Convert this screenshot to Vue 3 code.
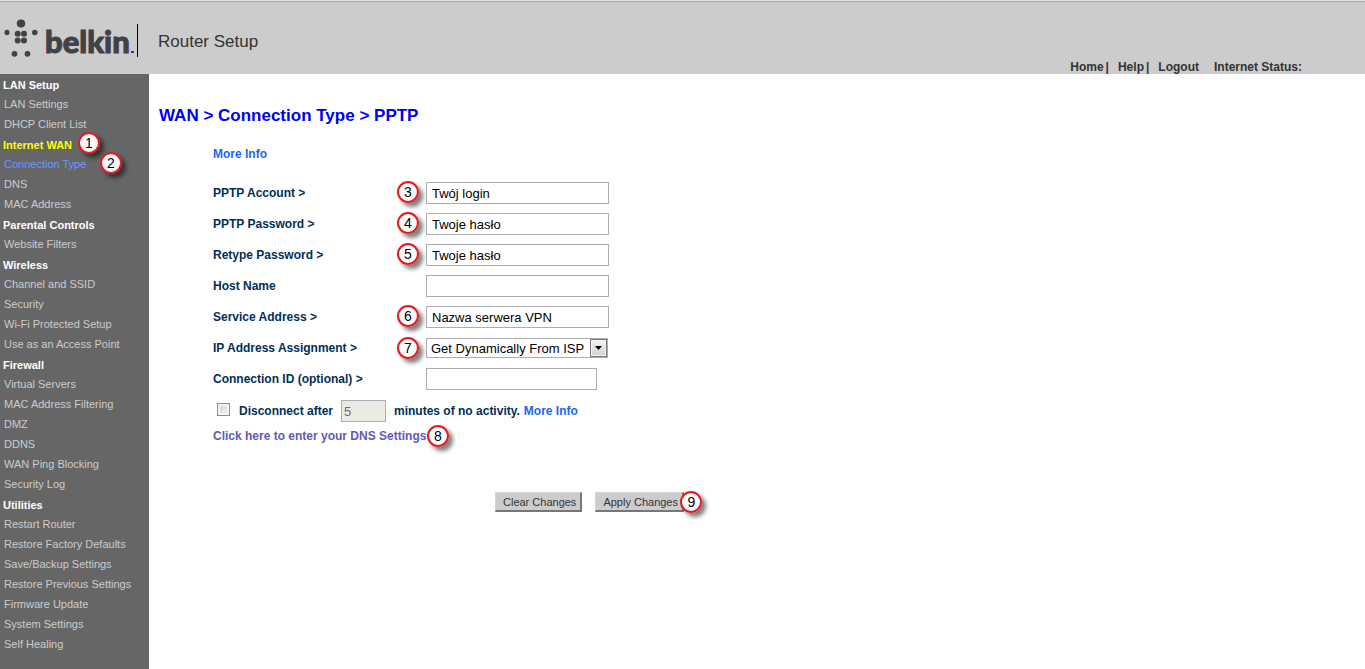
<script setup>
import { ref } from 'vue'

const menu = [
  { title: 'LAN Setup', items: ['LAN Settings', 'DHCP Client List'] },
  { title: 'Internet WAN', active: true, badge: 1, items: ['Connection Type', 'DNS', 'MAC Address'] },
  { title: 'Parental Controls', items: ['Website Filters'] },
  { title: 'Wireless', items: ['Channel and SSID', 'Security', 'Wi-Fi Protected Setup', 'Use as an Access Point'] },
  { title: 'Firewall', items: ['Virtual Servers', 'MAC Address Filtering', 'DMZ', 'DDNS', 'WAN Ping Blocking', 'Security Log'] },
  {
    title: 'Utilities',
    items: [
      'Restart Router', 'Restore Factory Defaults', 'Save/Backup Settings', 'Restore Previous Settings',
      'Firmware Update', 'System Settings', 'Self Healing'
    ]
  }
]
const current = 'Connection Type'

const fields = ref([
  { id: 'account', label: 'PPTP Account >', value: 'Twój login', badge: 3 },
  { id: 'password', label: 'PPTP Password >', value: 'Twoje hasło', badge: 4 },
  { id: 'retype', label: 'Retype Password >', value: 'Twoje hasło', badge: 5 },
  { id: 'host', label: 'Host Name', value: '' },
  { id: 'service', label: 'Service Address >', value: 'Nazwa serwera VPN', badge: 6 }
])
const connectionId = ref('')
const idle = ref('5')
const autoDisconnect = ref(false)
</script>

<template>
  <div class="page">
    <header class="header">
      <div class="brand">
        <svg class="mark" viewBox="0 0 34 40" aria-hidden="true">
          <ellipse cx="17" cy="5.5" rx="4.2" ry="4" />
          <ellipse cx="3" cy="14.5" rx="2.5" ry="2.8" />
          <ellipse cx="30.8" cy="14.5" rx="2.8" ry="2.8" />
          <circle cx="13.7" cy="15.8" r="3" />
          <circle cx="20" cy="15.8" r="3" />
          <circle cx="13.7" cy="22.4" r="3" />
          <circle cx="20" cy="22.4" r="3" />
          <circle cx="10.5" cy="35.8" r="2.9" />
          <circle cx="23.5" cy="35.8" r="2.9" />
        </svg>
        <span class="wordmark">belkin<i class="dot"></i></span>
        <span class="product">Router Setup</span>
      </div>
      <nav class="links">
        <span class="link"><a href="#home">Home</a><span>|</span></span>
        <span class="link"><a href="#help">Help</a><span>|</span></span>
        <a href="#logout">Logout</a>
        <span class="status">Internet Status:</span>
      </nav>
    </header>

    <div class="body">
      <nav class="sidebar">
        <section v-for="group in menu" :key="group.title">
          <h2 :class="{ active: group.active }">
            {{ group.title }}
            <span v-if="group.badge" class="badge badge-group">{{ group.badge }}</span>
          </h2>
          <ul>
            <li v-for="item in group.items" :key="item">
              <a :href="'#' + item" :class="{ current: item === current }">{{ item }}</a>
              <span v-if="item === current" class="badge badge-item">2</span>
            </li>
          </ul>
        </section>
      </nav>

      <main class="content">
        <h1>WAN &gt; Connection Type &gt; PPTP</h1>
        <form @submit.prevent>
          <p class="info"><a href="#more">More Info</a></p>
          <div v-for="field in fields" :key="field.id" class="row">
            <label :for="field.id">{{ field.label }}</label>
            <div class="control">
              <span v-if="field.badge" class="badge badge-field">{{ field.badge }}</span>
              <input :id="field.id" v-model="field.value" type="text" class="text">
            </div>
          </div>
          <div class="row">
            <label for="assignment">IP Address Assignment &gt;</label>
            <div class="control">
              <span class="badge badge-field">7</span>
              <div class="picker">
                <select id="assignment">
                  <option>Get Dynamically From ISP</option>
                </select>
                <span class="arrow">
                  <svg viewBox="0 0 7 4" aria-hidden="true"><path d="M0 0h7L3.5 4z" /></svg>
                </span>
              </div>
            </div>
          </div>
          <div class="row">
            <label for="connection">Connection ID (optional) &gt;</label>
            <div class="control">
              <input id="connection" v-model="connectionId" type="text" class="text short">
            </div>
          </div>
          <div class="idle">
            <input id="disconnect" v-model="autoDisconnect" type="checkbox">
            <label for="disconnect">Disconnect after</label>
            <input v-model="idle" type="text" class="minutes" aria-label="Minutes" disabled>
            <span>minutes of no activity.</span>
            <a href="#activity">More Info</a>
          </div>
          <p class="dns">
            <a href="#dns">Click here to enter your DNS Settings</a>
            <span class="badge badge-end">8</span>
          </p>
          <div class="actions">
            <button type="reset">Clear Changes</button>
            <span class="apply">
              <button type="submit">Apply Changes</button>
              <span class="badge badge-apply">9</span>
            </span>
          </div>
        </form>
      </main>
    </div>
  </div>
</template>

<style>
body {
  margin: 0;
  background: #fff;
}
</style>

<style scoped>
.page {
  min-height: 100vh;
  display: flex;
  flex-direction: column;
  font-family: "Liberation Sans", Arial, sans-serif;
  font-size: 12px;
}
.page * {
  box-sizing: border-box;
}
a {
  text-decoration: none;
  color: inherit;
}
.header {
  height: 74px;
  display: flex;
  justify-content: space-between;
  background: #ccc;
  border-top: 1px solid #e2e4e2;
  box-shadow: inset 0 1px #a6a8a6;
}
.brand {
  display: flex;
  align-items: flex-start;
  padding: 17px 0 0 4px;
  color: #404244;
}
.mark {
  width: 34px;
  height: 40px;
  fill: #404244;
}
.wordmark {
  display: flex;
  align-items: baseline;
  margin: 6px 0 0 7px;
  width: 93px;
  height: 33px;
  border-right: 1px solid #000;
  font: 900 31px/34px Lato, sans-serif;
  -webkit-text-stroke: 1px #404244;
}
.dot {
  width: 3px;
  height: 2px;
  margin-left: 1px;
  background: #404244;
}
.product {
  margin-left: 20px;
  padding-top: 14px;
  font-size: 17px;
  line-height: 20px;
  color: #333;
}
.links {
  align-self: flex-end;
  display: flex;
  gap: 9px;
  padding-right: 63px;
  font-weight: bold;
  line-height: 14px;
  color: #333;
}
.link {
  display: flex;
  gap: 2px;
}
.status {
  margin-left: 6px;
}
.body {
  flex: 1;
  display: flex;
}
.sidebar {
  flex: none;
  width: 149px;
  padding-bottom: 15px;
  background: #666;
  font-size: 11px;
  line-height: 20px;
}
.sidebar h2 {
  position: relative;
  width: fit-content;
  height: 20px;
  margin: 0;
  padding-left: 3px;
  font-size: 11px;
  line-height: 22px;
  color: #fff;
}
.sidebar h2.active {
  color: #ff0;
}
.sidebar ul {
  margin: 0;
  padding: 0 0 0 4px;
  list-style: none;
}
.sidebar li {
  position: relative;
  width: fit-content;
  height: 20px;
  color: #ccc;
}
.current {
  color: #69f;
}
.content {
  flex: 1;
  padding: 32px 10px 0;
}
h1 {
  margin: 0;
  font-size: 17px;
  line-height: 20px;
  color: #0000f0;
}
form {
  padding-left: 54px;
  font-weight: bold;
  color: #036;
}
.info {
  margin: 0 0 14px;
  padding-top: 19px;
  line-height: 18px;
}
.info a,
.idle a {
  color: #1a66f5;
}
.row {
  display: grid;
  grid-template-columns: 213px 1fr;
  align-items: center;
  height: 31px;
}
.row,
.idle {
  color: #003058;
}
.control {
  position: relative;
  display: flex;
}
.text,
.minutes {
  height: 22px;
  border: 1px solid #abadb3;
  border-radius: 0;
  background: #fff;
  color: #000;
  font: 13px "Liberation Sans", Arial, sans-serif;
}
.text {
  width: 183px;
  padding: 1px 5px 0;
}
.short {
  width: 171px;
}
.picker {
  position: relative;
  width: 182px;
  height: 20px;
}
select {
  appearance: none;
  width: 100%;
  height: 20px;
  padding: 1px 20px 0 4px;
  border: 1px solid #abadb3;
  border-radius: 0;
  background: #fff;
  color: #000;
  font: 13px "Liberation Sans", Arial, sans-serif;
}
.arrow {
  position: absolute;
  top: 1px;
  right: 1px;
  width: 17px;
  height: 18px;
  display: grid;
  place-items: center;
  border: 1px solid #777;
  background: linear-gradient(#f2f2f2, #d2d2d2);
  box-shadow: inset 0 0 0 1px #f4f4f4;
  pointer-events: none;
}
.arrow svg {
  width: 7px;
  height: 4px;
}
.idle {
  display: flex;
  align-items: center;
  height: 34px;
  padding-left: 4px;
}
.idle input[type="checkbox"] {
  appearance: none;
  width: 13px;
  height: 13px;
  margin: 0 9px 4px 0;
  border: 1px solid #8e8f8f;
  background: linear-gradient(135deg, #cbcfd5, #f6f6f6);
  box-shadow: inset 0 0 0 2px #f4f4f4;
}
.idle input[type="checkbox"]:checked {
  background: #456;
}
.minutes {
  width: 45px;
  margin: 0 8px;
  padding: 1px 2px 0;
  background: #ebebe4;
  color: #6d6d6d;
}
.idle a {
  margin-left: 4px;
}
.dns {
  position: relative;
  width: fit-content;
  margin: 0;
  line-height: 16px;
  color: #6059c0;
}
.actions {
  display: flex;
  gap: 13px;
  padding: 48px 0 0 282px;
}
.apply {
  position: relative;
}
button {
  display: block;
  height: 20px;
  padding: 0 4px 0 7px;
  border: 1px solid;
  border-color: #d4d4d4 #777 #777 #d4d4d4;
  border-right-width: 2px;
  border-bottom-width: 2px;
  background: #ccc;
  color: #333;
  font: 11px "Liberation Sans", Arial, sans-serif;
}
.badge {
  position: absolute;
  width: 22px;
  height: 22px;
  border: 2px solid #e01b24;
  border-radius: 50%;
  background: radial-gradient(#fff 50%, #f3e4e4);
  box-shadow: 4px 4px 4px rgba(0, 0, 0, 0.5);
  color: #000;
  font-size: 14px;
  font-weight: normal;
  line-height: 18px;
  text-align: center;
}
.badge-group {
  left: 78px;
  top: -2px;
}
.badge-item {
  left: 96px;
  top: -2px;
}
.badge-field {
  left: -29px;
  top: -1px;
}
.badge-end {
  left: 214px;
  top: -3px;
}
.badge-apply {
  left: 85px;
  top: -1px;
}
</style>
